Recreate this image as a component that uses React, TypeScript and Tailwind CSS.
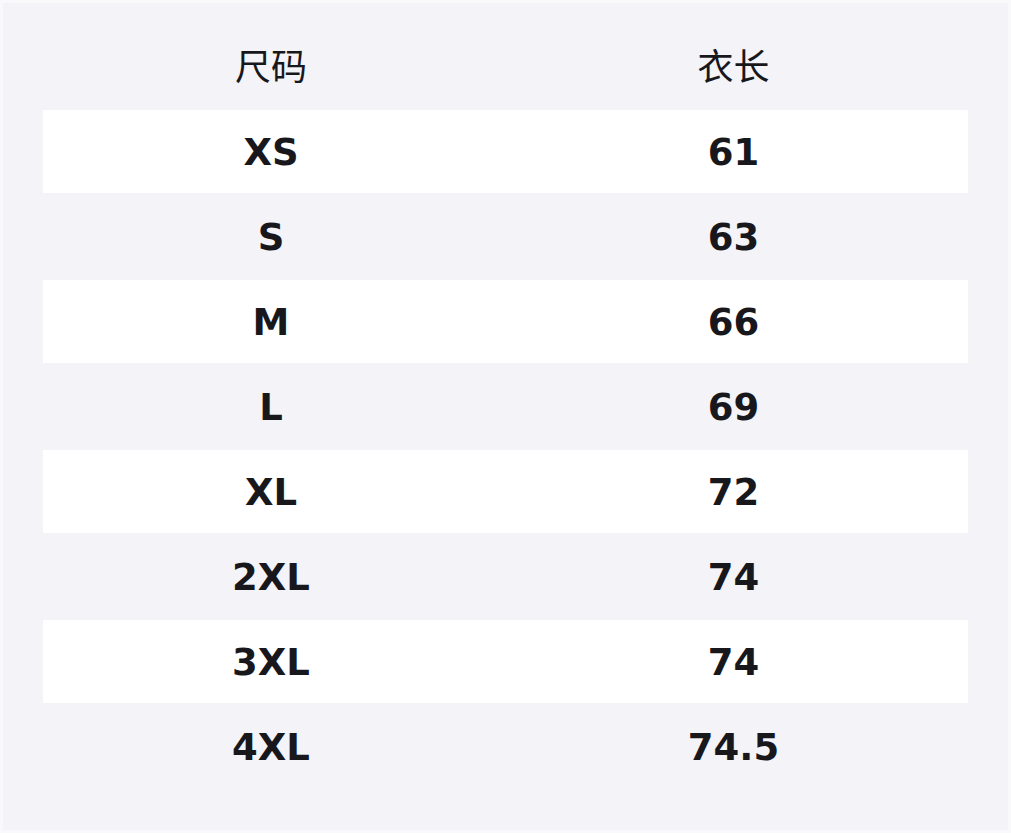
const rows: [string, string][] = [
  ["XS", "61"],
  ["S", "63"],
  ["M", "66"],
  ["L", "69"],
  ["XL", "72"],
  ["2XL", "74"],
  ["3XL", "74"],
  ["4XL", "74.5"],
];

export default function App() {
  return (
    <div className="min-h-[833px] w-[1011px] bg-[#f9f9fb] p-[3px]">
      <div
        className="h-[827px] w-[1005px] bg-[#f3f3f8] px-10 pt-5 pb-10 text-[#18181c]"
        style={{ fontFamily: '"DejaVu Sans", "Noto Sans CJK SC", sans-serif' }}
      >
        <div className="grid h-[87px] grid-cols-[456px_1fr] items-center pt-[2px] text-center text-[36px] font-normal">
          <div>尺码</div>
          <div>衣长</div>
        </div>
        {rows.map(([size, len], i) => (
          <div
            key={size}
            className={
              i % 2 === 0
                ? "grid h-[83px] grid-cols-[456px_1fr] items-center bg-white pt-[2px] text-center text-[37px] font-bold"
                : "grid h-[87px] grid-cols-[456px_1fr] items-center pt-[2px] text-center text-[37px] font-bold"
            }
          >
            <div>{size}</div>
            <div>{len}</div>
          </div>
        ))}
      </div>
    </div>
  );
}
